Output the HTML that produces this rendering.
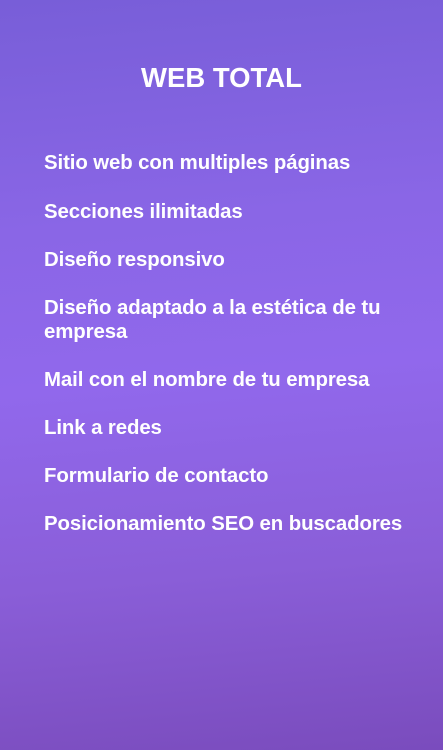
<!DOCTYPE html>
<html><head><meta charset="utf-8"><style>
html,body{margin:0;padding:0}
body{width:443px;height:750px;overflow:hidden;background:linear-gradient(175deg,#785ed8 0%,#8a66e6 30%,#9168ec 50%,#8a5ed8 75%,#7a4cbd 100%);font-family:"Liberation Sans",Arial,sans-serif;color:#fff;position:relative}
h1{position:absolute;top:62px;left:0;width:443px;text-align:center;margin:0;font-size:27.5px;font-weight:700;line-height:32px;letter-spacing:0}
.it{position:absolute;left:44px;width:375px;font-size:20.4px;font-weight:700;line-height:24px;letter-spacing:-0.1px}
</style></head><body>
<h1>WEB TOTAL</h1>
<div class="it" style="top:151px">Sitio web con multiples páginas</div>
<div class="it" style="top:200px">Secciones ilimitadas</div>
<div class="it" style="top:248px">Diseño responsivo</div>
<div class="it" style="top:296px">Diseño adaptado a la estética de tu empresa</div>
<div class="it" style="top:368px">Mail con el nombre de tu empresa</div>
<div class="it" style="top:416px">Link a redes</div>
<div class="it" style="top:464px">Formulario de contacto</div>
<div class="it" style="top:512px;white-space:nowrap">Posicionamiento SEO en buscadores</div>
</body></html>
